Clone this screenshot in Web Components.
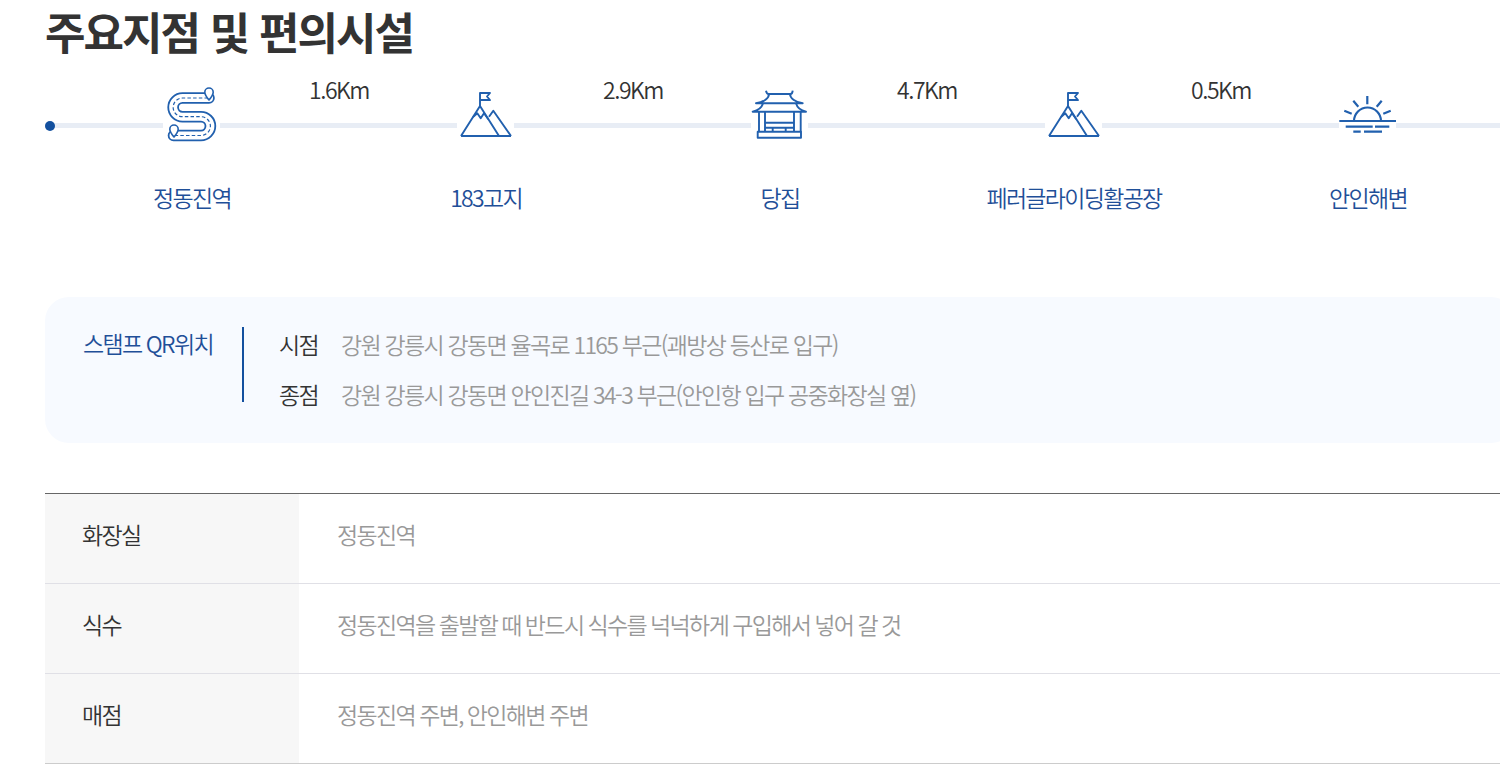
<!DOCTYPE html>
<html lang="ko">
<head>
<meta charset="utf-8">
<style>
html, body {margin:0; height:775px; overflow:hidden; background:#fff;}
body {font-family:"Noto Sans CJK KR","Noto Sans",sans-serif; color:#333;}
</style>
</head>
<body>
<course-page>
    <h-title>주요지점 및 편의시설</h-title>
    <course-line>
        <course-stop icon="road" label="정동진역" dist="1.6Km"></course-stop>
        <course-stop icon="peak" label="183고지" dist="2.9Km"></course-stop>
        <course-stop icon="gate" label="당집" dist="4.7Km"></course-stop>
        <course-stop icon="peak" label="페러글라이딩활공장" dist="0.5Km"></course-stop>
        <course-stop icon="sun" label="안인해변"></course-stop>
    </course-line>
    <stamp-box>
        <stamp-row name="시점">강원 강릉시 강동면 율곡로 1165 부근(괘방상 등산로 입구)</stamp-row>
        <stamp-row name="종점">강원 강릉시 강동면 안인진길 34-3 부근(안인항 입구 공중화장실 옆)</stamp-row>
    </stamp-box>
    <info-table>
        <info-row name="화장실">정동진역</info-row>
        <info-row name="식수">정동진역을 출발할 때 반드시 식수를 넉넉하게 구입해서 넣어 갈 것</info-row>
        <info-row name="매점">정동진역 주변, 안인해변 주변</info-row>
    </info-table>
</course-page>
<script>
const Icons = {
    road: `<g transform="translate(5 0)">
        <path stroke-width="11.600" stroke-linecap="round" d="M41 12H14.500a9.350 9.350 0 0 0 0 18.700H33a9.400 9.400 0 0 1 0 18.800H5.500"/>
        <path stroke="#fff" stroke-width="8" stroke-linecap="round" d="M41 12H14.500a9.350 9.350 0 0 0 0 18.700H33a9.400 9.400 0 0 1 0 18.800H5.500"/>
        <path stroke-width="1.200" stroke-dasharray="3.500 2.200" d="M40 12H14.500a9.350 9.350 0 0 0 0 18.700H33a9.400 9.400 0 0 1 0 18.800H8"/>
        <path fill="#fff" stroke-width="1.600" d="M41 14c-2.500-3-4.200-5-4.200-7.800a4.200 4.200 0 0 1 8.400 0c0 2.800-1.700 4.800-4.200 7.800zM6 51c-2.500-3-4.200-5-4.200-7.800a4.200 4.200 0 0 1 8.400 0c0 2.800-1.700 4.800-4.200 7.800z"/>
    </g>`,
    peak: `<path d="M4 50H54M4 50 23 20 42 50M32 30.700 36.300 24.700 54 50"/>
        <path d="M23 20V7H33L30 10.500 33 14H23"/>
        <path d="M16 31 20.300 27.300 23.700 32.300 27 27.300 31.300 33.300"/>`,
    gate: `<path d="M15 4.700C15.500 7 16 8 17.500 8H39.500C41 8 41.500 7 41.700 4.700"/>
        <path d="M18 8C18 12 13 16 5 17.300H51.700C44 16 39 12 39 8"/>
        <path d="M12 17.300C11 21 7 24.500 1.700 25.700H55C49.700 24.500 46 21 45 17.300"/>
        <path d="M8 25.700V45.700M14 25.700V45.700M43 25.700V45.700M49.700 25.700V45.700M14 36.700H43M14 41.700H43M21.700 41.700V45.700M34.700 41.700V45.700"/>
        <path d="M6.700 45.700H50V51.700H6.700z"/>`,
    sun: `<g stroke-width="2.200">
        <path d="M15 35a13.500 13.500 0 0 1 27 0M.3 35H57M6.700 40.700H33.700M36 40.700H50.300M14.300 45.700H21.700M25 45.700H43"/>
        <path d="M28.300 10V18.300M14.300 14.700 19.300 20.700M42.700 14.700 37.700 20.700M5.300 24.700 12.700 27.700M51.700 24.700 44.300 27.700"/>
    </g>`,
};

class CoursePage extends HTMLElement {
    constructor() {
        super();
        this.attachShadow({mode:'open'}).innerHTML = `
        <style>
        :host {display:block; width:1500px; height:775px; overflow:hidden; padding-left:45px; box-sizing:border-box;}
        ::slotted(*) {width:1470px;}
        </style>
        <slot></slot>`;
    }
}
class HTitle extends HTMLElement {
    constructor() {
        super();
        this.attachShadow({mode:'open'}).innerHTML = `
        <style>
        :host {display:block; height:68px; font-size:44px; font-weight:700; line-height:63px; letter-spacing:-2px; word-spacing:.500px; color:#333; white-space:nowrap;}
        </style>
        <slot></slot>`;
    }
}
class CourseLine extends HTMLElement {
    constructor() {
        super();
        this.attachShadow({mode:'open'}).innerHTML = `
        <style>
        :host {display:flex; position:relative; height:229px;}
        :host::before {content:''; position:absolute; left:0; right:0; top:55px; height:5px; background:#e8edf5;}
        :host::after {content:''; position:absolute; left:0; top:53px; width:10px; height:10px; border-radius:50%; background:#13509f;}
        </style>
        <slot></slot>`;
    }
}
class CourseStop extends HTMLElement {
    constructor() {
        super();
        let dist = this.getAttribute('dist');
        this.attachShadow({mode:'open'}).innerHTML = `
        <style>
        :host {display:flex; flex-direction:column; align-items:center; position:relative; width:294px; font-size:23px; font-weight:350; letter-spacing:-1.700px; word-spacing:-.500px;}
        svg {display:block; margin:18px 1px 0 0; background:#fff; position:relative; z-index:1;
            fill:none; stroke:#2160ae; stroke-width:1.900; stroke-linejoin:round; stroke-linecap:butt;}
        .label {margin-top:37px; line-height:36px; color:#1f4f98; white-space:nowrap;}
        .dist {position:absolute; right:0; top:3px; transform:translateX(50%); line-height:36px; letter-spacing:-1.450px; color:#333;}
        </style>
        <svg width="57" height="56" viewBox="0 0 57 56">${Icons[this.getAttribute('icon')]}</svg>
        <div class="label">${this.getAttribute('label')}</div>
        ${dist ? `<div class="dist">${dist}</div>` : ''}`;
    }
}
class StampBox extends HTMLElement {
    constructor() {
        super();
        this.attachShadow({mode:'open'}).innerHTML = `
        <style>
        :host {display:flex; box-sizing:border-box; height:146px; padding:30px 38px; background:#f7faff; border-radius:24px;}
        .title {width:159px; font-size:23px; font-weight:350; line-height:33px; letter-spacing:-1.650px; word-spacing:-.500px; color:#1f4f98; white-space:nowrap;}
        .rows {height:75px; border-left:2px solid #13509f; padding-left:35px; display:flex; flex-direction:column; gap:14px;}
        </style>
        <div class="title">스탬프 QR위치</div>
        <div class="rows"><slot></slot></div>`;
    }
}
class StampRow extends HTMLElement {
    constructor() {
        super();
        this.attachShadow({mode:'open'}).innerHTML = `
        <style>
        :host {display:flex; gap:23px; font-size:23px; font-weight:350; line-height:38px; margin-top:-2px; letter-spacing:-1.650px; word-spacing:-.350px; white-space:nowrap;}
        b {font-weight:350; color:#333;}
        span {color:#999;}
        </style>
        <b>${this.getAttribute('name')}</b><span><slot></slot></span>`;
    }
}
class InfoTable extends HTMLElement {
    constructor() {
        super();
        this.attachShadow({mode:'open'}).innerHTML = `
        <style>
        :host {display:block; margin-top:50px; border-top:1px solid #666;}
        ::slotted(:last-child) {border-bottom-color:#ccc;}
        </style>
        <slot></slot>`;
    }
}
class InfoRow extends HTMLElement {
    constructor() {
        super();
        this.attachShadow({mode:'open'}).innerHTML = `
        <style>
        :host {display:flex; height:89px; border-bottom:1px solid #e0e0e6; font-size:23px; font-weight:350; letter-spacing:-1.650px; word-spacing:-.700px; line-height:36px;}
        b {display:flex; align-items:center; box-sizing:border-box; width:254px; padding:0 0 10px 37px; font-weight:350; color:#333; background:#f7f7f7;}
        span {display:flex; align-items:center; padding:0 0 10px 38px; color:#999; white-space:nowrap;}
        </style>
        <b>${this.getAttribute('name')}</b><span><slot></slot></span>`;
    }
}
customElements.define('course-page', CoursePage);
customElements.define('h-title', HTitle);
customElements.define('course-line', CourseLine);
customElements.define('course-stop', CourseStop);
customElements.define('stamp-box', StampBox);
customElements.define('stamp-row', StampRow);
customElements.define('info-table', InfoTable);
customElements.define('info-row', InfoRow);
</script>
</body>
</html>
